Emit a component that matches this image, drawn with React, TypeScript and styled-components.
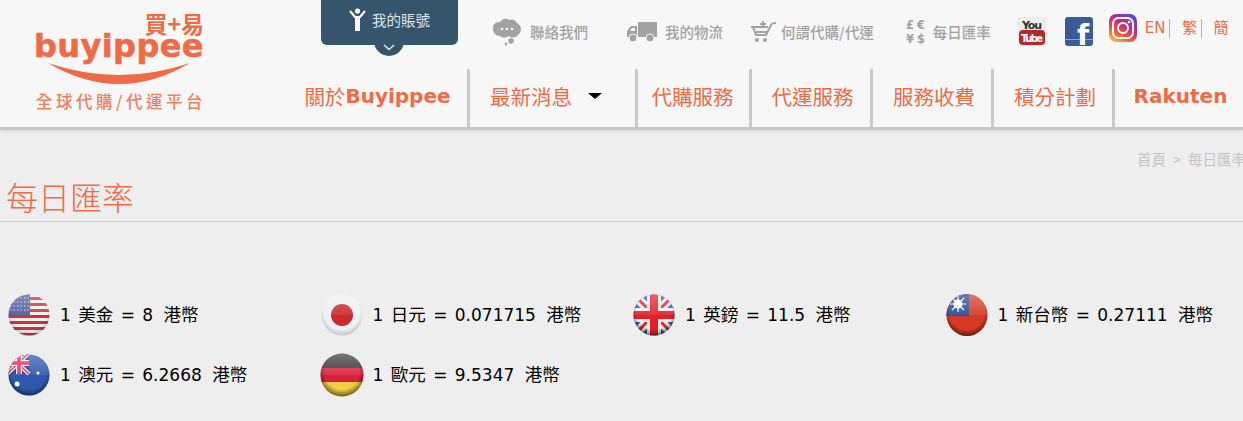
import styled, { createGlobalStyle } from "styled-components";

const ORANGE = "#ee6b45";
const CJK = `"Noto Sans CJK TC"`;
const LATIN = `"DejaVu Sans"`;

const GlobalStyle = createGlobalStyle`
  html, body { margin: 0; padding: 0; background: #eeeeee; }
  body { width: 1243px; height: 421px; overflow: hidden; font-family: ${LATIN}, ${CJK}, sans-serif; }
`;

const Header = styled.header`
  display: flex;
  height: 127px;
  background: #f7f7f7;
  border-bottom: 3px solid #c9c9c9;
  box-shadow: 0 2px 3px #dddddd;
`;

const Logo = styled.div`
  width: 240px;
  flex: none;
  padding-left: 34px;
  box-sizing: border-box;
  display: flex;
  flex-direction: column;
  color: ${ORANGE};
`;

const LogoCn = styled.div`
  width: 170px;
  margin-top: 11px;
  text-align: right;
  font: 700 23px/25px ${CJK}, sans-serif;
`;

const LogoName = styled.div`
  font: 700 32px/30px ${LATIN}, sans-serif;
  letter-spacing: 0.4px;
  margin-top: -5px;
  -webkit-text-stroke: 0.6px ${ORANGE};
`;

const Smile = styled.svg`
  display: block;
  width: 170px;
  height: 24px;
  margin-top: 1px;
`;

const Slogan = styled.div`
  font: 500 16.5px/20px ${CJK}, sans-serif;
  letter-spacing: 3.5px;
  white-space: nowrap;
  margin-top: 5px;
  margin-left: 2px;
  color: #f0805f;
`;

const Right = styled.div`
  flex: 1;
  min-width: 0;
  display: flex;
  flex-direction: column;
`;

const TopRow = styled.div`
  height: 69px;
  display: flex;
  align-items: flex-start;
  padding-left: 81px;
`;

const AccountTab = styled.div`
  position: relative;
  width: 137px;
  height: 45px;
  flex: none;
  background: #34556b;
  border-radius: 0 0 6px 6px;
  display: flex;
  align-items: center;
  padding: 0 0 5px 28px;
  box-sizing: border-box;
  gap: 6px;
  color: #dfe5e9;
  font: 400 14.5px/20px ${CJK}, sans-serif;

  &::after {
    content: "";
    position: absolute;
    left: 53px;
    top: 26px;
    width: 30px;
    height: 30px;
    border-radius: 50%;
    background: #34556b;
  }
`;

const AccountLabel = styled.span`
  position: relative;
  z-index: 1;
`;

const Chevron = styled.svg`
  position: absolute;
  left: 62px;
  top: 44px;
  z-index: 1;
`;

const TopLink = styled.div<{ $ml: number; $gap: number }>`
  display: flex;
  align-items: center;
  height: 28px;
  margin-top: 18px;
  margin-left: ${(p) => p.$ml}px;
  gap: ${(p) => p.$gap}px;
  flex: none;
  color: #a2a2a2;
  font: 500 14.5px/20px ${CJK}, sans-serif;
  white-space: nowrap;
`;

const SocialIcon = styled.svg<{ $ml: number; $mt: number }>`
  display: block;
  flex: none;
  margin-left: ${(p) => p.$ml}px;
  margin-top: ${(p) => p.$mt}px;
`;

const Lang = styled.a<{ $ml: number; $bar?: boolean }>`
  flex: none;
  margin-top: 19px;
  margin-left: ${(p) => p.$ml}px;
  height: 19px;
  color: ${ORANGE};
  font: 400 15px/19px ${LATIN}, ${CJK}, sans-serif;
  padding-right: ${(p) => (p.$bar ? 4 : 0)}px;
  border-right: ${(p) => (p.$bar ? "1px solid #9fb6c6" : "none")};
`;

const Nav = styled.nav`
  height: 58px;
  display: flex;
`;

const NavItem = styled.div<{ $w: number; $pl?: number; $pr?: number; $last?: boolean }>`
  width: ${(p) => p.$w}px;
  flex: none;
  box-sizing: border-box;
  display: flex;
  align-items: center;
  justify-content: center;
  padding: 0 ${(p) => p.$pr ?? 0}px 4px ${(p) => p.$pl ?? 0}px;
  color: ${ORANGE};
  font: 400 20.5px/28px ${CJK}, sans-serif;
  white-space: nowrap;
  border-right: ${(p) => (p.$last ? "none" : "3px solid #c9c9c9")};
`;

const Strong = styled.b`
  font-family: ${LATIN}, sans-serif;
  font-size: 20px;
  font-weight: 700;
`;

const Caret = styled.span`
  width: 0;
  height: 0;
  margin-left: 16px;
  border-left: 7px solid transparent;
  border-right: 7px solid transparent;
  border-top: 6px solid #000;
`;

const Main = styled.main`
  height: 291px;
  overflow: hidden;
`;

const Crumbs = styled.div`
  height: 19px;
  margin-top: 19px;
  padding-left: 1137px;
  display: flex;
  gap: 7px;
  color: #c4c4c4;
  font: 400 14.5px/19px ${CJK}, sans-serif;
  white-space: nowrap;
`;

const Title = styled.h1`
  margin: 12px 0 0;
  padding: 0 0 0 6px;
  height: 41px;
  border-bottom: 1px solid #cccccc;
  color: ${ORANGE};
  font: 300 32px/33px ${CJK}, sans-serif;
`;

const Rates = styled.div`
  display: grid;
  grid-template-columns: repeat(4, 312.5px);
  grid-auto-rows: 60px;
  padding: 63px 0 0 7px;
`;

const Rate = styled.div`
  display: flex;
  align-items: center;
  gap: 9px;
  color: #000;
  font: 400 17px/22px ${LATIN}, ${CJK}, sans-serif;
  word-spacing: 2px;
  white-space: nowrap;
`;

const RateCn = styled.span<{ $ml?: number }>`
  font-size: 17.5px;
  margin-left: ${(p) => p.$ml ?? 0}px;
`;

const FlagSvg = styled.svg`
  display: block;
  flex: none;
  width: 44px;
  height: 44px;
`;

type FlagName = "us" | "jp" | "gb" | "tw" | "au" | "de";

const stripes = [0, 1, 2, 3, 4, 5, 6];

const flagArt: Record<FlagName, React.ReactNode> = {
  us: (
    <>
      <rect width="44" height="44" fill="#eeeeee" />
      {stripes.map((i) => (
        <rect key={i} y={4 + i * 6} width="44" height="3" fill="#c9343c" />
      ))}
      <rect width="23" height="22" fill="#4c5a9c" />
      <path d="M3 5h19M3 9h19M3 13h19M3 17h19" stroke="#cfd3e6" strokeWidth="1.2" strokeDasharray="1.5 2" />
    </>
  ),
  jp: (
    <>
      <rect width="44" height="44" fill="#eef0f5" />
      <circle cx="22" cy="22" r="11" fill="#c92a2c" />
    </>
  ),
  gb: (
    <>
      <rect width="44" height="44" fill="#3a5aa8" />
      <path d="M0 0L44 44M44 0L0 44" stroke="#eeeeee" strokeWidth="9" />
      <path d="M0 0L44 44M44 0L0 44" stroke="#d8262c" strokeWidth="3" />
      <path d="M22 0V44M0 22H44" stroke="#eeeeee" strokeWidth="14" />
      <path d="M22 0V44M0 22H44" stroke="#e3202a" strokeWidth="8" />
    </>
  ),
  tw: (
    <>
      <rect width="44" height="44" fill="#d43a24" />
      <rect width="24" height="23" fill="#2a4a94" />
      <circle cx="13" cy="11" r="4.500" fill="#ffffff" />
      <path d="M13 3V19M5 11H21M7 5L19 17M19 5L7 17" stroke="#ffffff" strokeWidth="1.2" />
    </>
  ),
  au: (
    <>
      <rect width="44" height="44" fill="#2f58ad" />
      <rect width="22" height="21" fill="#24348a" />
      <path d="M0 0L22 21M22 0L0 21" stroke="#eeeeee" strokeWidth="4" />
      <path d="M0 0L22 21M22 0L0 21" stroke="#d8264a" strokeWidth="1.5" />
      <path d="M12 0V21M0 10H22" stroke="#eeeeee" strokeWidth="6" />
      <path d="M12 0V21M0 10H22" stroke="#e2265a" strokeWidth="3.5" />
      <circle cx="10" cy="31" r="2.500" fill="#ffffff" />
      <circle cx="31" cy="20" r="1.500" fill="#ffffff" />
    </>
  ),
  de: (
    <>
      <rect width="44" height="15" fill="#3a3a3a" />
      <rect y="15" width="44" height="15" fill="#d8203c" />
      <rect y="29" width="44" height="15" fill="#f0d040" />
    </>
  ),
};

const Flag = ({ name }: { name: FlagName }) => {
  const ry = name === "de" ? 21.5 : name === "tw" ? 21 : 20.5;
  const rx = name === "de" ? 21.5 : 20.5;
  return (
    <FlagSvg viewBox="0 0 44 44">
      <defs>
        <clipPath id={`clip-${name}`}>
          <ellipse cx="22" cy="22" rx={rx} ry={ry} />
        </clipPath>
        <radialGradient id={`gloss-${name}`} cx="0.5" cy="0.42" r="0.58">
          <stop offset="0.7" stopColor="#000" stopOpacity="0" />
          <stop offset="1" stopColor="#000" stopOpacity={name === "jp" || name === "us" ? 0.22 : 0.6} />
        </radialGradient>
        <linearGradient id={`shine-${name}`} x1="0" y1="0" x2="0" y2="1">
          <stop offset="0" stopColor="#fff" stopOpacity="0.3" />
          <stop offset="0.5" stopColor="#fff" stopOpacity="0.08" />
          <stop offset="0.5" stopColor="#fff" stopOpacity="0" />
        </linearGradient>
      </defs>
      <g clipPath={`url(#clip-${name})`}>
        {flagArt[name]}
        <rect width="44" height="44" fill={`url(#shine-${name})`} />
        <rect width="44" height="44" fill={`url(#gloss-${name})`} />
      </g>
    </FlagSvg>
  );
};

const rates: { flag: FlagName; unit: string; value: string }[] = [
  { flag: "us", unit: "美金", value: "8" },
  { flag: "jp", unit: "日元", value: "0.071715" },
  { flag: "gb", unit: "英鎊", value: "11.5" },
  { flag: "tw", unit: "新台幣", value: "0.27111" },
  { flag: "au", unit: "澳元", value: "6.2668" },
  { flag: "de", unit: "歐元", value: "9.5347" },
];

const PersonIcon = () => (
  <svg width="17" height="24" viewBox="0 0 17 24">
    <circle cx="8.5" cy="3" r="2.6" fill="#fff" />
    <path d="M1 3L6 9H11L16 3" fill="none" stroke="#fff" strokeWidth="2.2" />
    <path d="M6 8H11V23H6Z" fill="#fff" />
  </svg>
);

const ChatIcon = () => (
  <svg width="28" height="28" viewBox="0 0 28 28">
    <path d="M7 4a6 6 0 0 1 9-2a6 6 0 0 1 8 3a7 7 0 0 1 1 12a6 6 0 0 1-9 1a7 7 0 0 1-9 0a7 7 0 0 1-7-7a6 6 0 0 1 7-7Z" fill="#a2a2a2" />
    <circle cx="9" cy="11" r="1.3" fill="#f7f7f7" />
    <circle cx="14" cy="11" r="1.3" fill="#f7f7f7" />
    <circle cx="19" cy="11" r="1.3" fill="#f7f7f7" />
    <circle cx="18" cy="23" r="2.8" fill="#a2a2a2" />
    <circle cx="13" cy="26" r="1.4" fill="#a2a2a2" />
  </svg>
);

const TruckIcon = () => (
  <svg width="30" height="20" viewBox="0 0 30 20">
    <rect x="11" y="0" width="19" height="15" fill="#a2a2a2" />
    <path d="M0 15V9L4 4H10V15Z" fill="#a2a2a2" />
    <path d="M3 9L5 6H8V9Z" fill="#f7f7f7" />
    <circle cx="6" cy="16" r="4" fill="#a2a2a2" stroke="#f7f7f7" />
    <circle cx="23" cy="16" r="4" fill="#a2a2a2" stroke="#f7f7f7" />
  </svg>
);

const CartIcon = () => (
  <svg width="27" height="22" viewBox="0 0 27 22">
    <path d="M1 6H18M3 6L6 14H16L21 4C21.6 2.500 23 2 26 2M6 11H17" fill="none" stroke="#a2a2a2" strokeWidth="2" />
    <path d="M13 0V6M10 3H16" stroke="#a2a2a2" strokeWidth="2" />
    <circle cx="7" cy="19" r="2" fill="#a2a2a2" />
    <circle cx="15" cy="19" r="2" fill="#a2a2a2" />
  </svg>
);

const CurrencyIcon = () => (
  <svg width="21" height="28" viewBox="0 0 21 28" fontFamily={LATIN} fontWeight="700" fontSize="11.5" fill="#a2a2a2">
    <text x="0" y="11">£</text>
    <text x="11" y="11">€</text>
    <text x="0" y="25">¥</text>
    <text x="11" y="25">$</text>
  </svg>
);

const YouTubeIcon = () => (
  <SocialIcon $ml={26} $mt={17} width="30" height="29" viewBox="0 0 30 29" fontFamily={LATIN} fontWeight="700">
    <rect width="30" height="29" rx="4" fill="#ececec" />
    <text x="15" y="12" textAnchor="middle" fontSize="11" fill="#333" textLength="20">You</text>
    <rect x="2" y="13" width="26" height="15" rx="4" fill="#b3282d" />
    <text x="15" y="24.500" textAnchor="middle" fontSize="10" fill="#fff" textLength="22">Tube</text>
  </SocialIcon>
);

const FacebookIcon = () => (
  <SocialIcon $ml={18} $mt={17} width="28" height="29" viewBox="0 0 28 29" fontFamily={LATIN} fontWeight="700">
    <rect width="28" height="29" rx="3" fill="#3b5a98" />
    <rect y="22" width="28" height="1" fill="#8fa3c9" />
    <text x="12" y="28" fontSize="28" fill="#fff">f</text>
  </SocialIcon>
);

const InstagramIcon = () => (
  <SocialIcon $ml={16} $mt={14} width="28" height="28" viewBox="0 0 28 28">
    <defs>
      <linearGradient id="ig" x1="0.1" y1="1" x2="0.7" y2="0">
        <stop offset="0" stopColor="#fdc35a" />
        <stop offset="0.35" stopColor="#ee5a32" />
        <stop offset="0.6" stopColor="#d62a78" />
        <stop offset="1" stopColor="#5a47c8" />
      </linearGradient>
    </defs>
    <rect width="28" height="28" rx="7" fill="url(#ig)" />
    <rect x="4" y="4" width="20" height="20" rx="5.500" fill="none" stroke="#fff" strokeWidth="2" />
    <circle cx="14" cy="14" r="5" fill="none" stroke="#fff" strokeWidth="2" />
    <circle cx="20" cy="8" r="1.300" fill="#fff" />
  </SocialIcon>
);

export default function App() {
  return (
    <>
      <GlobalStyle />
      <Header>
        <Logo>
          <LogoCn>買+易</LogoCn>
          <LogoName>buyippee</LogoName>
          <Smile viewBox="0 0 170 24">
            <path d="M14 1Q85 43 156 1Q85 25 14 1Z" fill={ORANGE} />
          </Smile>
          <Slogan>全球代購/代運平台</Slogan>
        </Logo>
        <Right>
          <TopRow>
            <AccountTab>
              <PersonIcon />
              <AccountLabel>我的賬號</AccountLabel>
              <Chevron width="12" height="7" viewBox="0 0 12 7">
                <path d="M1 1L6 5.500L11 1" fill="none" stroke="#e3e8eb" strokeWidth="1.600" />
              </Chevron>
            </AccountTab>
            <TopLink $ml={35} $gap={9}>
              <ChatIcon />
              聯絡我們
            </TopLink>
            <TopLink $ml={39} $gap={8}>
              <TruckIcon />
              我的物流
            </TopLink>
            <TopLink $ml={27} $gap={4}>
              <CartIcon />
              何謂代購/代運
            </TopLink>
            <TopLink $ml={32} $gap={6}>
              <CurrencyIcon />
              每日匯率
            </TopLink>
            <YouTubeIcon />
            <FacebookIcon />
            <InstagramIcon />
            <Lang $ml={8} $bar>EN</Lang>
            <Lang $ml={12} $bar>繁</Lang>
            <Lang $ml={11}>簡</Lang>
          </TopRow>
          <Nav>
            <NavItem $w={230} $pl={48}>關於<Strong>Buyippee</Strong></NavItem>
            <NavItem $w={168} $pr={13}>最新消息<Caret /></NavItem>
            <NavItem $w={114} $pr={2}>代購服務</NavItem>
            <NavItem $w={121} $pl={3}>代運服務</NavItem>
            <NavItem $w={121} $pl={4}>服務收費</NavItem>
            <NavItem $w={121} $pl={4}>積分計劃</NavItem>
            <NavItem $w={128} $pl={3} $last><Strong>Rakuten</Strong></NavItem>
          </Nav>
        </Right>
      </Header>
      <Main>
        <Crumbs>
          <span>首頁</span>
          <span>&gt;</span>
          <span>每日匯率</span>
        </Crumbs>
        <Title>每日匯率</Title>
        <Rates>
          {rates.map((r) => (
            <Rate key={r.flag}>
              <Flag name={r.flag} />
              <span>1 <RateCn>{r.unit}</RateCn> = {r.value} <RateCn $ml={3}>港幣</RateCn></span>
            </Rate>
          ))}
        </Rates>
      </Main>
    </>
  );
}
